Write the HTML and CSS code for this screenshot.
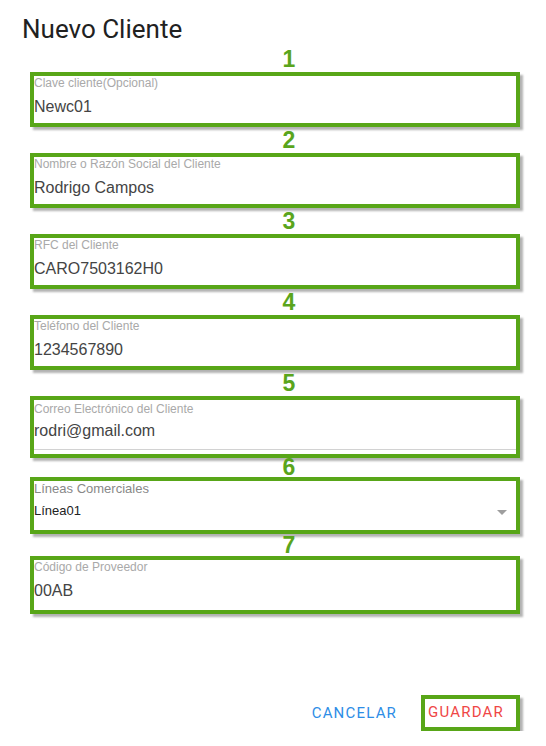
FILE: index.html
```html
<!DOCTYPE html>
<html>
<head>
    <meta charset="UTF-8">
    <title>Nuevo Cliente</title>
    <link rel="stylesheet" href="styles.css">
</head>
<body>
    <div class="dialog">
        <h2 class="dialog-title">Nuevo Cliente</h2>
        <form class="fields">
            <div class="num">1</div>
            <div class="box">
                <label class="label">Clave cliente(Opcional)</label>
                <div class="value">Newc01</div>
            </div>

            <div class="num">2</div>
            <div class="box">
                <label class="label">Nombre o Razón Social del Cliente</label>
                <div class="value">Rodrigo Campos</div>
            </div>

            <div class="num">3</div>
            <div class="box">
                <label class="label">RFC del Cliente</label>
                <div class="value">CARO7503162H0</div>
            </div>

            <div class="num">4</div>
            <div class="box">
                <label class="label">Teléfono del Cliente</label>
                <div class="value">1234567890</div>
            </div>

            <div class="num">5</div>
            <div class="box box-underlined">
                <label class="label">Correo Electrónico del Cliente</label>
                <div class="value">rodri@gmail.com</div>
            </div>

            <div class="num num-short">6</div>
            <div class="box box-select">
                <label class="label">Líneas Comerciales</label>
                <div class="select-row">
                    <span class="value">Línea01</span>
                    <svg class="arrow" width="10" height="5" viewBox="0 0 10 5">
                        <polygon points="0,0 10,0 5,5" fill="#9e9e9e"/>
                    </svg>
                </div>
            </div>

            <div class="num num-mid">7</div>
            <div class="box box-tall">
                <label class="label">Código de Proveedor</label>
                <div class="value">00AB</div>
            </div>
        </form>

        <div class="actions">
            <button type="button" class="btn btn-cancel">CANCELAR</button>
            <button type="button" class="btn btn-save">GUARDAR</button>
        </div>
    </div>
</body>
</html>
```

FILE: styles.css
```css
/* Dialog "Nuevo Cliente" */
body {
    margin: 0;
    padding: 0;
    background: #fff;
    font-family: "Liberation Sans", Arial, sans-serif;
}
.dialog {
    width: 546px;
    padding: 14px 0 0 22px;
    box-sizing: border-box;
}
.dialog-title {
    margin: 0;
    font-family: Roboto, "Liberation Sans", sans-serif;
    font-size: 26px;
    font-weight: 400;
    line-height: 30px;
    color: #212121;
}
.fields {
    margin: 2px 0 0 8px;
    width: 490px;
}

/* green step numbers */
.num {
    height: 26px;
    line-height: 26px;
    padding-left: 28px;
    text-align: center;
    font-size: 23px;
    font-weight: bold;
    color: #5aa51c;
}
.num-short {
    height: 19px;
    line-height: 19px;
}
.num-mid {
    height: 22px;
    line-height: 22px;
}

/* outlined fields */
.box {
    border: 4px solid #58a618;
    box-shadow: 3px 3px 2px rgba(0, 0, 0, 0.3);
    padding: 0 0 6px 0;
}
.box-tall {
    padding-bottom: 9px;
}
.label {
    display: block;
    font-size: 12px;
    line-height: 14px;
    color: #a9a9a9;
}
.value {
    margin-top: 7px;
    font-size: 16px;
    line-height: 20px;
    color: #444;
}
.box-underlined {
    padding: 2px 0 4px 0;
}
.box-underlined .value {
    margin-top: 5px;
    padding-bottom: 8px;
    border-bottom: 1px solid #d2d2d2;
}
.box-select {
    padding-bottom: 11px;
}
.box-select .label {
    font-size: 13px;
    line-height: 15px;
    color: #888;
}
.select-row {
    display: flex;
    align-items: center;
    justify-content: space-between;
    margin-top: 6px;
}
.select-row .value {
    margin-top: 0;
    font-size: 13px;
    line-height: 17px;
    color: #222;
}
.arrow {
    margin: 4px 9px 0 0;
}

/* buttons */
.actions {
    display: flex;
    justify-content: flex-end;
    align-items: center;
    width: 498px;
    margin-top: 81px;
}
.btn {
    background: none;
    border: none;
    padding: 0;
    font-family: Roboto, "Liberation Sans", sans-serif;
    font-size: 15px;
    line-height: 20px;
    letter-spacing: 1.2px;
    cursor: pointer;
}
.btn-cancel {
    color: #2e8de6;
    margin-right: 24px;
}
.btn-save {
    color: #ef4646;
    border: 4px solid #58a618;
    box-shadow: 3px 3px 2px rgba(0, 0, 0, 0.3);
    padding: 3px 12px 5px 3px;
}
```
